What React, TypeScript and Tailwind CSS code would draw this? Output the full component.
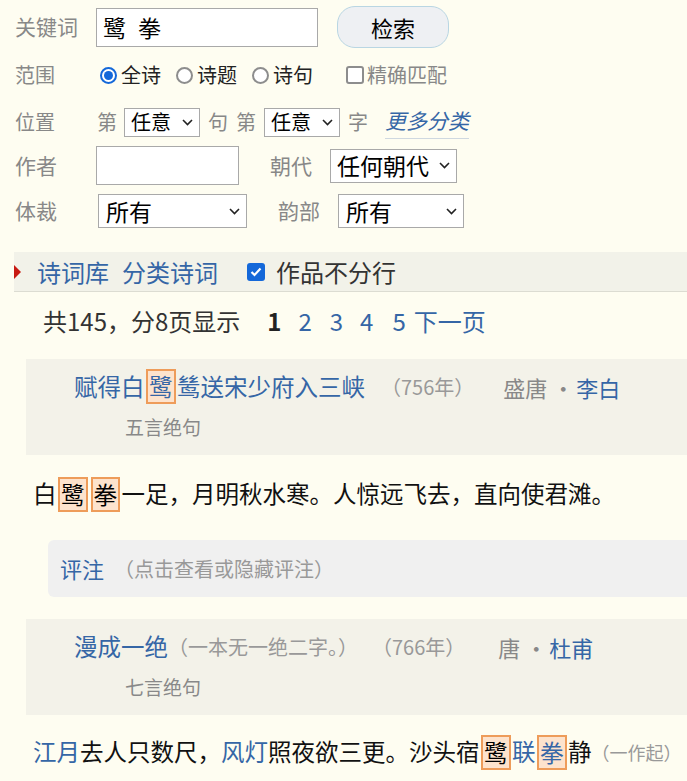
const blue = "text-[#3566a6]";

const Chevron = () => (
  <svg width="11" height="7" viewBox="0 0 11 7" className="shrink-0">
    <path d="M1 1l4.5 4.5L10 1" fill="none" stroke="#222" strokeWidth="1.6" />
  </svg>
);

const FakeSelect = ({ label, className }: { label: string; className: string }) => (
  <div className={`flex items-center justify-between border border-[#a9a9a9] bg-white text-black ${className}`}>
    <span>{label}</span>
    <Chevron />
  </div>
);

const Radio = ({ checked }: { checked?: boolean }) =>
  checked ? (
    <span className="flex h-[17px] w-[17px] shrink-0 items-center justify-center rounded-full border-2 border-[#1468d9] bg-white">
      <span className="block h-[9px] w-[9px] rounded-full bg-[#1468d9]" />
    </span>
  ) : (
    <span className="block h-[17px] w-[17px] shrink-0 rounded-full border-2 border-[#8d8d8d] bg-white" />
  );

const Mark = ({ ch, tone = "text-black" }: { ch: string; tone?: string }) => (
  <span className={`mx-[1.5px] inline-block border-2 border-[#ee9c5a] bg-[#fde3cd] px-[1px] leading-[31px] ${tone}`}>
    {ch}
  </span>
);

const App = () => {
  return (
    <div
      className="min-h-screen w-[687px] overflow-hidden bg-[#fefdf1] text-[#333]"
      style={{ fontFamily: '"Noto Sans CJK SC", "Noto Sans", sans-serif' }}
    >
      <div className="pl-[15px] pt-[6px] text-[21px] text-[#888]">
        {/* keyword */}
        <div className="flex h-[42px] items-center">
          <span className="w-[81px]">关键词</span>
          <div className="flex h-[39px] w-[222px] items-center border border-[#a9a9a9] bg-white pl-[6px] text-[23px] text-black">
            <span>鹭</span>
            <span className="ml-[12px]">拳</span>
          </div>
          <button className="ml-[19px] h-[42px] w-[112px] rounded-[18px] border border-[#b9d6e3] bg-[#eef0f3] text-[22px] text-black">
            检索
          </button>
        </div>

        {/* scope */}
        <div className="mt-[12px] flex h-[30px] items-center text-[20px]">
          <span className="w-[85px]">范围</span>
          <Radio checked />
          <span className="ml-[4px] text-[#222]">全诗</span>
          <span className="ml-[15px]">
            <Radio />
          </span>
          <span className="ml-[4px] text-[#222]">诗题</span>
          <span className="ml-[15px]">
            <Radio />
          </span>
          <span className="ml-[4px] text-[#222]">诗句</span>
          <span className="ml-[33px] block h-[18px] w-[18px] shrink-0 rounded-[3px] border-2 border-[#8d8d8d] bg-white" />
          <span className="ml-[3px]">精确匹配</span>
        </div>

        {/* position */}
        <div className="mt-[17px] flex h-[30px] items-center text-[20px]">
          <span className="w-[82px]">位置</span>
          <span>第</span>
          <FakeSelect label="任意" className="ml-[7px] h-[29px] w-[76px] px-[6px] text-[20px]" />
          <span className="ml-[8px]">句</span>
          <span className="ml-[8px]">第</span>
          <FakeSelect label="任意" className="ml-[8px] h-[29px] w-[76px] px-[6px] text-[20px]" />
          <span className="ml-[8px]">字</span>
          <span className={`ml-[17px] border-b border-[#cfd8e0] pb-[1px] text-[21px] italic ${blue}`}>更多分类</span>
        </div>

        {/* author */}
        <div className="mt-[9px] flex h-[39px] items-center">
          <span className="w-[81px]">作者</span>
          <div className="h-[39px] w-[143px] border border-[#a9a9a9] bg-white" />
          <span className="ml-[31px] w-[60px]">朝代</span>
          <FakeSelect label="任何朝代" className="h-[34px] w-[127px] px-[6px] text-[23px]" />
        </div>

        {/* form */}
        <div className="mt-[9px] flex h-[34px] items-center">
          <span className="w-[83px]">体裁</span>
          <FakeSelect label="所有" className="h-[34px] w-[149px] px-[7px] pr-[6px] text-[23px]" />
          <span className="ml-[31px] w-[60px]">韵部</span>
          <FakeSelect label="所有" className="h-[34px] w-[126px] px-[7px] pr-[6px] text-[23px]" />
        </div>
      </div>

      {/* bar */}
      <div className="ml-[14px] mt-[24px] flex h-[40px] items-center border-b border-[#dcdcd2] bg-[#f2f2e9] text-[24px]">
        <svg width="8" height="14" viewBox="0 0 8 14" className="shrink-0">
          <path d="M0 0L7 7L0 14Z" fill="#c81a12" />
        </svg>
        <span className={`ml-[15px] ${blue}`}>诗词库</span>
        <span className={`ml-[13px] ${blue}`}>分类诗词</span>
        <span className="ml-[29px] flex h-[18px] w-[18px] shrink-0 items-center justify-center rounded-[3px] bg-[#1468d9]">
          <svg width="12" height="10" viewBox="0 0 12 10">
            <path d="M1.5 5l3 3L10.5 1.5" fill="none" stroke="#fff" strokeWidth="2.2" />
          </svg>
        </span>
        <span className="ml-[11px] text-[#333]">作品不分行</span>
      </div>

      {/* pager */}
      <div className="mt-[9px] flex h-[40px] items-center pl-[43px] text-[24px] text-[#333]">
        <span>共145，分8页显示</span>
        <span className="ml-[27px] font-bold text-[#222]">1</span>
        <span className={`ml-[17px] ${blue}`}>2</span>
        <span className={`ml-[18px] ${blue}`}>3</span>
        <span className={`ml-[17px] ${blue}`}>4</span>
        <span className={`ml-[19px] ${blue}`}>5</span>
        <span className={`ml-[8px] ${blue}`}>下一页</span>
      </div>

      {/* result 1 */}
      <div className="ml-[26px] mt-[18px] h-[96px] bg-[#f3f2e9] pl-[48px] pt-[11px]">
        <div className="flex h-[34px] items-center whitespace-nowrap">
          <span className={`text-[23.5px] ${blue}`}>
            赋得白
            <Mark ch="鹭" tone="text-[#3566a6]" />
            鸶送宋少府入三峡
          </span>
          <span className="ml-[16px] text-[20px] text-[#999]">（756年）</span>
          <span className="ml-[29px] text-[22px] text-[#888]">盛唐&nbsp;·</span>
          <span className={`ml-[2px] text-[22px] ${blue}`}>李白</span>
        </div>
        <div className="ml-[51px] mt-[9px] text-[19px] text-[#888]">五言绝句</div>
      </div>

      <div className="mt-[19px] flex h-[40px] items-center whitespace-nowrap pl-[33px] text-[23.5px] text-[#111]">
        白<Mark ch="鹭" />
        <Mark ch="拳" />
        一足，月明秋水寒。人惊远飞去，直向使君滩。
      </div>

      <div className="ml-[48px] mt-[26px] flex h-[57px] items-center rounded-l-[6px] bg-[#f0f0f0] pl-[12px]">
        <span className={`text-[22px] ${blue}`}>评注</span>
        <span className="ml-[10px] text-[20px] text-[#999]">（点击查看或隐藏评注）</span>
      </div>

      {/* result 2 */}
      <div className="ml-[26px] mt-[22px] h-[96px] bg-[#f3f2e9] pl-[48px] pt-[11px]">
        <div className="flex h-[34px] items-center whitespace-nowrap">
          <span className={`text-[23.5px] ${blue}`}>漫成一绝</span>
          <span className="text-[20px] text-[#999]">（一本无一绝二字。）</span>
          <span className="ml-[14px] text-[20px] text-[#999]">（766年）</span>
          <span className="ml-[33px] text-[22px] text-[#888]">唐&nbsp;·</span>
          <span className={`ml-[2px] text-[22px] ${blue}`}>杜甫</span>
        </div>
        <div className="ml-[51px] mt-[9px] text-[19px] text-[#888]">七言绝句</div>
      </div>

      <div className="mt-[17px] flex h-[40px] items-center whitespace-nowrap pl-[33px] text-[23.5px] text-[#111]">
        <span className={blue}>江月</span>去人只数尺，<span className={blue}>风灯</span>照夜欲三更。沙头宿
        <Mark ch="鹭" />
        <span className={blue}>联</span>
        <Mark ch="拳" tone="text-[#3566a6]" />
        静<span className="text-[18px] text-[#999]">（一作起）</span>
      </div>
    </div>
  );
};

export default App;
